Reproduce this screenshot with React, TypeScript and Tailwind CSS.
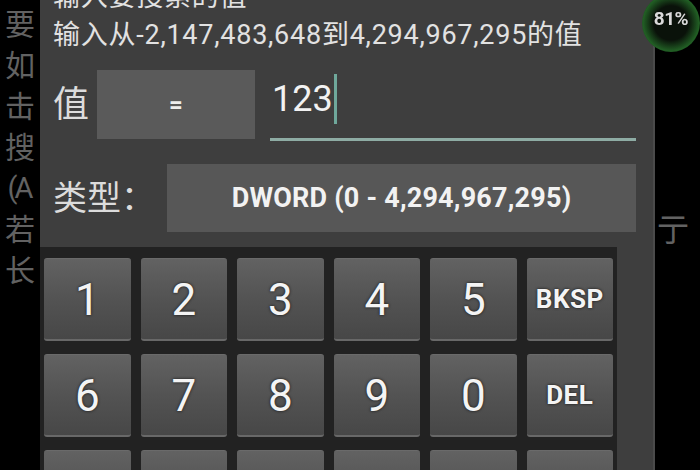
const font = { fontFamily: 'Roboto, "Noto Sans CJK SC", sans-serif' }

const sideChars = ['要', '如', '击', '搜', '(A', '若', '长']

const keys = ['1', '2', '3', '4', '5', 'BKSP', '6', '7', '8', '9', '0', 'DEL', '', '', '', '', '', '']

function Key({ label }: { label: string }) {
  const isWord = label.length > 1
  return (
    <div className="h-[83px] rounded-[3px] bg-gradient-to-b from-[#626262] via-[#535353] to-[#474747] border-t border-[#6a6a6a] border-b-2 border-b-[#686868] flex items-center justify-center">
      <span
        className={
          isWord
            ? 'text-[26px] font-bold text-[#f4f4f4] tracking-[0.5px] [text-shadow:0_0_3px_#111]'
            : 'text-[44px] font-normal text-[#f4f4f4] mt-[2px] [text-shadow:0_0_3px_#111]'
        }
      >
        {label}
      </span>
    </div>
  )
}

export default function App() {
  return (
    <div className="relative w-[700px] h-[470px] overflow-hidden bg-black flex" style={font}>
      {/* left edge of the screen behind the dialog */}
      <div className="w-[40px] shrink-0 flex flex-col items-center pt-[4px] text-[30px] leading-[41px] text-[#626262]">
        {sideChars.map((c) => (
          <div key={c} className={c.length > 1 ? 'text-[29px] tracking-[-3px] -ml-[2px]' : ''}>
            {c}
          </div>
        ))}
      </div>

      {/* dialog */}
      <div className="w-[615px] shrink-0 h-full bg-[#3e3e3e] border-r-2 border-[#4b4b4b] flex flex-col overflow-hidden">
        <div className="-mt-[18px] h-[30px] leading-[30px] pl-[13px] text-[27px] text-[#e2e2e2] whitespace-nowrap tracking-[0.75px]">
          输入要搜索的值
        </div>
        <div className="mt-[8px] h-[30px] leading-[30px] pl-[13px] text-[27px] text-[#e2e2e2] whitespace-nowrap tracking-[0.75px]">
          输入从-2,147,483,648到4,294,967,295的值
        </div>

        {/* value row */}
        <div className="mt-[17px] flex items-center pl-[13px]">
          <span className="w-[44px] text-[36px] text-[#dcdcdc] leading-none">值</span>
          <div className="w-[158px] h-[69px] bg-[#5a5a5a] flex items-center justify-center text-[24px] font-bold text-[#eeeeee]">
            =
          </div>
          <div className="ml-[15px] w-[366px] h-[75px] relative flex items-center">
            <div className="flex items-center mb-[12px]">
              <span className="pl-[2px] text-[36px] text-[#f2f2f2] leading-none">123</span>
              <span className="ml-[1px] w-[3px] h-[50px] bg-[#6fa89b]" />
            </div>
            <div className="absolute left-0 right-0 bottom-[1px] h-[3px] bg-[#8eaca4]" />
          </div>
        </div>

        {/* type row */}
        <div className="mt-[22px] flex items-center pl-[13px]">
          <span className="w-[114px] text-[34px] text-[#dcdcdc] leading-none">类型：</span>
          <div className="w-[469px] h-[68px] bg-[#575757] flex items-center justify-center text-[27px] font-bold text-[#f2f2f2] tracking-[0.2px]">
            DWORD (0 - 4,294,967,295)
          </div>
        </div>

        {/* keypad */}
        <div className="mt-[15px] w-[577px] flex-1 bg-[#222222] pl-[4px] pr-[4px] pt-[11px]">
          <div className="grid grid-cols-6 gap-x-[10px] gap-y-[13px]">
            {keys.map((k, i) => (
              <Key key={i} label={k} />
            ))}
          </div>
        </div>
      </div>

      {/* right edge of the screen */}
      <div className="flex-1 relative">
        <div className="absolute left-[2px] top-[214px] text-[32px] text-[#626262] leading-none">亍</div>
      </div>

      {/* battery badge */}
      <div className="absolute left-[642px] -top-[6px] w-[58px] h-[58px] rounded-full bg-[radial-gradient(circle,#0a120a_42%,#215e24_68%,#0d1f0e_100%)] blur-[0.5px] flex items-start justify-center">
        <span className="mt-[11px] text-[19px] font-bold text-[#dadada] tracking-[-0.5px]">81%</span>
      </div>
    </div>
  )
}
